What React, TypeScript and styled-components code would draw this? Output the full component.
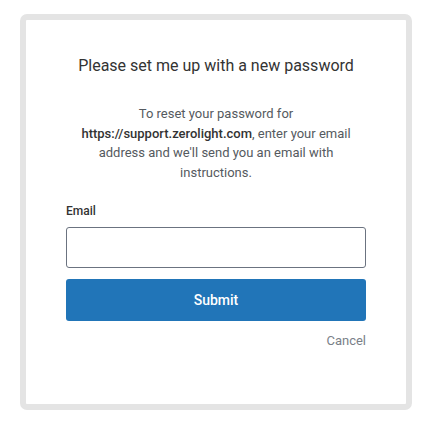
import React from "react";
import styled, { createGlobalStyle } from "styled-components";

const Global = createGlobalStyle`
  html, body { margin: 0; padding: 0; background: #ffffff; }
  body { font-family: Roboto, "Liberation Sans", Arial, sans-serif; }
  * { box-sizing: border-box; }
`;

const Page = styled.div`
  padding: 14px 23px 17px 20px;
`;

const Card = styled.div`
  width: 392px;
  height: 396px;
  border: 6px solid #e4e4e4;
  border-radius: 7px;
  background: #fff;
  padding: 36px 40px 0;
  display: flex;
  flex-direction: column;
  align-items: stretch;
`;

const Title = styled.h1`
  margin: 0;
  font-size: 16px;
  font-weight: 400;
  line-height: 20px;
  color: #333333;
  text-align: center;
`;

const Intro = styled.p`
  margin: 28px 0 0;
  font-size: 13px;
  line-height: 19.6px;
  color: #555a60;
  text-align: center;
  padding: 0 8px;
`;

const Strong = styled.strong`
  font-weight: 500;
  color: #333;
`;

const Label = styled.label`
  margin-top: 21px;
  font-size: 12px;
  font-weight: 500;
  line-height: 16px;
  color: #333;
`;

const Input = styled.input`
  margin-top: 8px;
  height: 41px;
  width: 100%;
  border: 1px solid #6b7380;
  border-radius: 3px;
  padding: 0 10px;
  font-size: 14px;
  outline: none;
`;

const Button = styled.button`
  margin-top: 11px;
  height: 42px;
  width: 100%;
  border: none;
  border-radius: 3px;
  background: #2175b8;
  color: #fff;
  font-family: Roboto, "Liberation Sans", Arial, sans-serif;
  font-size: 14px;
  font-weight: 500;
  cursor: pointer;
`;

const CancelRow = styled.div`
  margin-top: 12px;
  display: flex;
  justify-content: flex-end;
`;

const Cancel = styled.a`
  font-size: 13px;
  line-height: 16px;
  color: #7a7f88;
  text-decoration: none;
  cursor: pointer;
`;

export default function App() {
  return (
    <>
      <Global />
      <Page>
        <Card>
          <Title>Please set me up with a new password</Title>
          <Intro>
            To reset your password for <Strong>https://support.zerolight.com</Strong>, enter your email address and we'll send you an email with instructions.
          </Intro>
          <Label htmlFor="email">Email</Label>
          <Input id="email" type="email" />
          <Button>Submit</Button>
          <CancelRow>
            <Cancel>Cancel</Cancel>
          </CancelRow>
        </Card>
      </Page>
    </>
  );
}
